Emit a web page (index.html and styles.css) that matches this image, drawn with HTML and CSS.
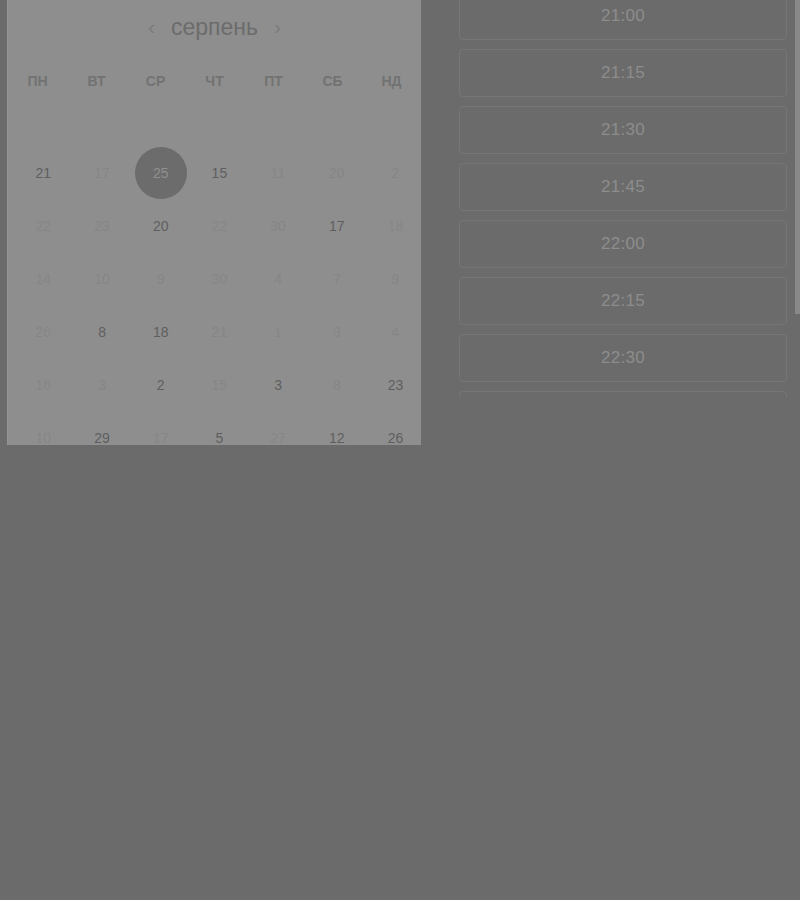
FILE: index.html
```html
<!DOCTYPE html>
<html lang="uk">
<head>
<meta charset="utf-8">
<title>Календар</title>
<link rel="stylesheet" href="styles.css">
</head>
<body>
<div class="layout">
  <section class="calendar">
    <div class="cal-head">
      <span class="arrow">‹</span>
      <span class="month">серпень</span>
      <span class="arrow">›</span>
    </div>
    <div class="weekdays">
      <span>пн</span><span>вт</span><span>ср</span><span>чт</span><span>пт</span><span>сб</span><span>нд</span>
    </div>
    <div class="days">
      <span class="day on">21</span><span class="day">17</span><span class="day sel"><b>25</b></span><span class="day on">15</span><span class="day">11</span><span class="day">20</span><span class="day">2</span>
      <span class="day">22</span><span class="day">23</span><span class="day on">20</span><span class="day">22</span><span class="day">30</span><span class="day on">17</span><span class="day">18</span>
      <span class="day">14</span><span class="day">10</span><span class="day">9</span><span class="day">30</span><span class="day">4</span><span class="day">7</span><span class="day">9</span>
      <span class="day">26</span><span class="day on">8</span><span class="day on">18</span><span class="day">21</span><span class="day">1</span><span class="day">9</span><span class="day">4</span>
      <span class="day">16</span><span class="day">3</span><span class="day on">2</span><span class="day">15</span><span class="day on">3</span><span class="day">8</span><span class="day on">23</span>
      <span class="day">10</span><span class="day on">29</span><span class="day">17</span><span class="day on">5</span><span class="day">27</span><span class="day on">12</span><span class="day on">26</span>
    </div>
  </section>
  <section class="time-pane">
    <div class="slots">
      <div class="slot">21:00</div>
      <div class="slot">21:15</div>
      <div class="slot">21:30</div>
      <div class="slot">21:45</div>
      <div class="slot">22:00</div>
      <div class="slot">22:15</div>
      <div class="slot">22:30</div>
      <div class="slot" aria-hidden="true"></div>
    </div>
    <div class="scrollbar"></div>
  </section>
</div>
</body>
</html>
```
FILE: styles.css
```css
html, body {
  margin: 0;
  padding: 0;
  background: #6b6b6b;
  font-family: "Liberation Sans", Arial, sans-serif;
}

.layout {
  display: flex;
  align-items: flex-start;
  padding-left: 7px;
}

.calendar {
  width: 414px;
  height: 445px;
  box-sizing: border-box;
  background: #8e8e8e;
  border-left: 1px solid #959595;
  overflow: hidden;
}

.cal-head {
  height: 54px;
  display: flex;
  align-items: center;
  justify-content: center;
  gap: 16px;
}

.arrow {
  font-size: 21px;
  color: #7b7b7b;
  line-height: 1;
  padding-bottom: 2px;
}

.month {
  font-size: 23px;
  color: #6c6c6c;
  line-height: 1;
}

.weekdays {
  height: 54px;
  display: grid;
  grid-template-columns: repeat(7, 59px);
  align-items: center;
}

.weekdays span {
  text-align: center;
  font-size: 14px;
  font-weight: bold;
  color: #727272;
  text-transform: uppercase;
}

.days {
  display: grid;
  grid-template-columns: repeat(7, 58.7px);
  grid-auto-rows: 53px;
  padding-top: 38px;
  padding-left: 6px;
}

.day {
  display: flex;
  align-items: center;
  justify-content: center;
  font-size: 14px;
  color: #868686;
}

.day.on {
  color: #5e5e5e;
}

.day.sel b {
  display: flex;
  align-items: center;
  justify-content: center;
  width: 52px;
  height: 52px;
  border-radius: 50%;
  background: #6c6c6c;
  color: #8f8f8f;
  font-weight: normal;
}

.time-pane {
  position: relative;
  flex: 1;
  height: 397px;
  overflow: hidden;
  padding: 0 13px 0 38px;
}

.slots {
  display: flex;
  flex-direction: column;
  gap: 9px;
  margin-top: -8px;
}

.slot {
  height: 48px;
  box-sizing: border-box;
  border: 1px solid #767676;
  border-radius: 4px;
  display: flex;
  align-items: center;
  justify-content: center;
  font-size: 17px;
  letter-spacing: 0.3px;
  color: #8d8d8d;
}

.scrollbar {
  position: absolute;
  top: 0;
  right: 0;
  width: 5px;
  height: 314px;
  background: #898989;
}
```
